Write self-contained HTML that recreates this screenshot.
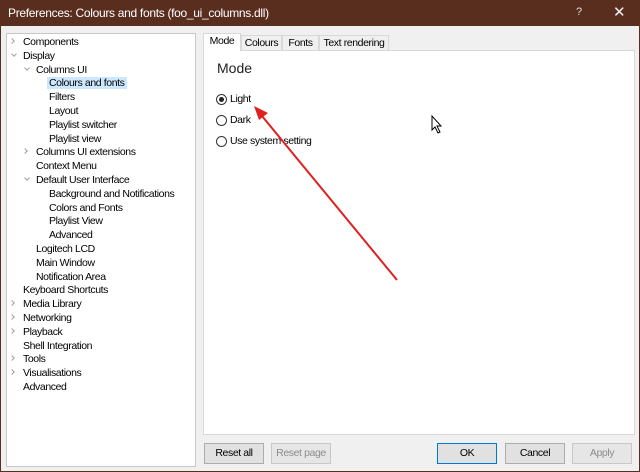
<!DOCTYPE html><html><head><style>
body{margin:0;width:640px;height:472px;background:#5a2e1f;font-family:"Liberation Sans",sans-serif;font-size:10.5px;letter-spacing:-0.4px;color:#000;position:relative;overflow:hidden}
.win{position:absolute;left:1px;top:26px;width:638px;height:445px;background:#f0f0f0}
.title{position:absolute;left:8px;top:6px;color:#fff;font-size:12px;letter-spacing:-0.3px}
.tree{position:absolute;left:6px;top:33px;width:188px;height:432px;background:#fff;border:1px solid #c8c8c8}
.it{position:absolute;height:14px;line-height:14px;white-space:nowrap}
.sel{background:#cce8ff;padding:0 2px;margin-left:-2px}
.chev{position:absolute;width:6px;height:6px;border-right:1px solid #a0a0a0;border-bottom:1px solid #a0a0a0}
.panel{position:absolute;left:203px;top:50px;width:430px;height:383px;background:#fff;border:1px solid #d9d9d9}
.tab{position:absolute;top:35px;height:15px;line-height:15px;border:1px solid #d9d9d9;border-bottom:none;background:#f0f0f0;text-align:center;box-sizing:border-box}
.btn{position:absolute;top:443px;width:58px;height:19px;border:1px solid #adadad;background:#e1e1e1;text-align:center;line-height:19px}
.dis{color:#8c8c8c;border-color:#c8c8c8;background:#e6e6e6}
.rad{position:absolute;left:216px;width:11px;height:11px;border:1px solid #333;border-radius:50%;box-sizing:border-box;background:#fff}
.rl{position:absolute;left:230px}
</style></head><body>
<div class="title">Preferences: Colours and fonts (foo_ui_columns.dll)</div>
<div style="position:absolute;left:576px;top:6px;color:#ddd;font-size:11px">?</div>
<div style="position:absolute;left:613px;top:3px;color:#eee;font-size:15px">✕</div>
<div class="win"></div>
<div class="tree"></div>
<div id="t"></div>
<script>
var d=[[0,"Components",">"],[0,"Display","v"],[1,"Columns UI","v"],[2,"Colours and fonts"],[2,"Filters"],[2,"Layout"],[2,"Playlist switcher"],[2,"Playlist view"],[1,"Columns UI extensions",">"],[1,"Context Menu"],[1,"Default User Interface","v"],[2,"Background and Notifications"],[2,"Colors and Fonts"],[2,"Playlist View"],[2,"Advanced"],[1,"Logitech LCD"],[1,"Main Window"],[1,"Notification Area"],[0,"Keyboard Shortcuts"],[0,"Media Library",">"],[0,"Networking",">"],[0,"Playback",">"],[0,"Shell Integration"],[0,"Tools",">"],[0,"Visualisations",">"],[0,"Advanced"]];
var h="";d.forEach(function(e,i){var y=35+i*13.8,x=23+e[0]*13;
if(e[2]==">")h+='<div class="chev" style="left:'+(x-13)+'px;top:'+(y+4)+'px;width:3px;height:3px;transform:rotate(-45deg)"></div>';
if(e[2]=="v")h+='<div class="chev" style="left:'+(x-11)+'px;top:'+(y+3)+'px;width:3px;height:3px;transform:rotate(45deg)"></div>';
h+='<div class="it" style="left:'+x+'px;top:'+y+'px"><span'+(i==3?' class="sel"':'')+'>'+e[1]+'</span></div>'});
document.getElementById("t").innerHTML=h;
</script>
<div class="panel"></div>
<div class="tab" style="left:203px;top:33px;width:38px;height:18px;background:#fff;z-index:2">Mode</div>
<div class="tab" style="left:241px;width:41px">Colours</div>
<div class="tab" style="left:282px;width:37px">Fonts</div>
<div class="tab" style="left:319px;width:70px">Text rendering</div>
<div style="position:absolute;left:217px;top:60px;font-size:14px;color:#222;letter-spacing:0">Mode</div>
<div class="rad" style="top:94px"><div style="position:absolute;left:2px;top:2px;width:5px;height:5px;border-radius:50%;background:#222"></div></div><div class="rl" style="top:93px">Light</div>
<div class="rad" style="top:115px"></div><div class="rl" style="top:114px">Dark</div>
<div class="rad" style="top:136px"></div><div class="rl" style="top:135px">Use system setting</div>
<svg style="position:absolute;left:0;top:0" width="640" height="472">
<line x1="397" y1="280" x2="262" y2="116" stroke="#e02020" stroke-width="2"/>
<polygon points="254,106 268,113 259,120" fill="#e02020"/>
<path d="M432 116 L432 130 L435 127 L438 133 L440 132 L437 126 L441 126 Z" fill="#fff" stroke="#000" stroke-width="1"/>
</svg>
<div class="btn" style="left:204px">Reset all</div>
<div class="btn dis" style="left:271px">Reset page</div>
<div class="btn" style="left:437px;border:1px solid #0078d7">OK</div>
<div class="btn" style="left:505px">Cancel</div>
<div class="btn dis" style="left:572px">Apply</div>
</body></html>
